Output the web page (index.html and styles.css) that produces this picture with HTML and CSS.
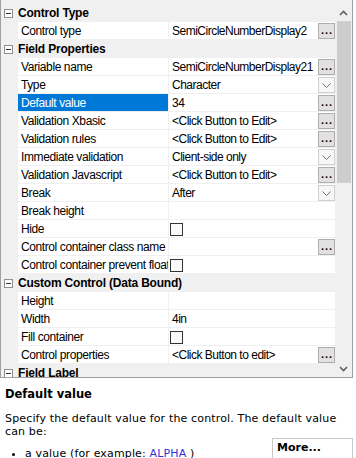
FILE: index.html
```html
<!DOCTYPE html>
<html lang="en">
<head>
  <meta charset="UTF-8">
  <title>Properties</title>
  <link rel="stylesheet" href="styles.css">
</head>
<body>
  <div class="grid">
    <div class="rows">
      <div class="cat"><span class="toggle"></span><span>Control Type</span></div>
      <div class="prop">
        <div class="name">Control type</div>
        <div class="value"><span class="text">SemiCircleNumberDisplay2</span><span class="btn">...</span></div>
      </div>

      <div class="cat"><span class="toggle"></span><span>Field Properties</span></div>
      <div class="prop">
        <div class="name">Variable name</div>
        <div class="value"><span class="text">SemiCircleNumberDisplay21</span><span class="btn">...</span></div>
      </div>
      <div class="prop">
        <div class="name">Type</div>
        <div class="value"><span class="text">Character</span><span class="drop"><svg width="9" height="5" viewBox="0 0 9 5"><polyline points="0.5,0.5 4.5,4.5 8.5,0.5" fill="none" stroke="#707070" stroke-width="1"/></svg></span></div>
      </div>
      <div class="prop">
        <div class="name selected">Default value</div>
        <div class="value"><span class="text">34</span><span class="btn">...</span></div>
      </div>
      <div class="prop">
        <div class="name">Validation Xbasic</div>
        <div class="value"><span class="text">&lt;Click Button to Edit&gt;</span><span class="btn">...</span></div>
      </div>
      <div class="prop">
        <div class="name">Validation rules</div>
        <div class="value"><span class="text">&lt;Click Button to Edit&gt;</span><span class="btn">...</span></div>
      </div>
      <div class="prop">
        <div class="name">Immediate validation</div>
        <div class="value"><span class="text">Client-side only</span><span class="drop"><svg width="9" height="5" viewBox="0 0 9 5"><polyline points="0.5,0.5 4.5,4.5 8.5,0.5" fill="none" stroke="#707070" stroke-width="1"/></svg></span></div>
      </div>
      <div class="prop">
        <div class="name">Validation Javascript</div>
        <div class="value"><span class="text">&lt;Click Button to Edit&gt;</span><span class="btn">...</span></div>
      </div>
      <div class="prop">
        <div class="name">Break</div>
        <div class="value"><span class="text">After</span><span class="drop"><svg width="9" height="5" viewBox="0 0 9 5"><polyline points="0.5,0.5 4.5,4.5 8.5,0.5" fill="none" stroke="#707070" stroke-width="1"/></svg></span></div>
      </div>
      <div class="prop">
        <div class="name">Break height</div>
        <div class="value"><span class="text"></span></div>
      </div>
      <div class="prop">
        <div class="name">Hide</div>
        <div class="value"><span class="check"></span></div>
      </div>
      <div class="prop">
        <div class="name">Control container class name</div>
        <div class="value"><span class="text"></span><span class="btn">...</span></div>
      </div>
      <div class="prop">
        <div class="name">Control container prevent float</div>
        <div class="value"><span class="check"></span></div>
      </div>

      <div class="cat"><span class="toggle"></span><span>Custom Control (Data Bound)</span></div>
      <div class="prop">
        <div class="name">Height</div>
        <div class="value"><span class="text"></span></div>
      </div>
      <div class="prop">
        <div class="name">Width</div>
        <div class="value"><span class="text">4in</span></div>
      </div>
      <div class="prop">
        <div class="name">Fill container</div>
        <div class="value"><span class="check"></span></div>
      </div>
      <div class="prop">
        <div class="name">Control properties</div>
        <div class="value"><span class="text">&lt;Click Button to edit&gt;</span><span class="btn">...</span></div>
      </div>

      <div class="cat"><span class="toggle"></span><span>Field Label</span></div>
    </div>

    <div class="scrollbar">
      <div class="sb-btn"><svg width="9" height="6" viewBox="0 0 9 6"><polyline points="1,5 4.5,1.5 8,5" fill="none" stroke="#606060" stroke-width="1.6"/></svg></div>
      <div class="track"><div class="thumb"></div></div>
      <div class="sb-btn"><svg width="9" height="6" viewBox="0 0 9 6"><polyline points="1,1 4.5,4.5 8,1" fill="none" stroke="#606060" stroke-width="1.6"/></svg></div>
    </div>
  </div>

  <div class="help">
    <h2>Default value</h2>
    <p>Specify the default value for the control. The default value can be:</p>
    <div class="more">More...</div>
    <ul>
      <li>a value (for example: <span class="code">ALPHA</span> )</li>
    </ul>
  </div>
</body>
</html>
```

FILE: styles.css
```css
html, body {
  margin: 0;
  padding: 0;
  overflow: hidden;
  background-color: #fff;
}

body {
  font-family: "Liberation Sans", Arial, sans-serif;
}

/* property grid */
.grid {
  display: flex;
  width: 353px;
  height: 378px;
  box-sizing: border-box;
  border: 1px solid #a0a0a0;
  border-top: none;
  background-color: #f0f0f0;
  font-size: 12px;
  letter-spacing: -0.4px;
  color: #000;
}

.rows {
  flex: 1;
  min-width: 0;
  padding-top: 4px;
  display: flex;
  flex-direction: column;
  gap: 1px;
  overflow: hidden;
}

.cat,
.prop {
  flex: none;
  display: flex;
  height: 17px;
  line-height: 18px;
}

.cat {
  align-items: center;
  padding-left: 3px;
  font-weight: bold;
  letter-spacing: -0.2px;
}

.toggle {
  flex: none;
  display: flex;
  align-items: center;
  justify-content: center;
  width: 9px;
  height: 9px;
  margin: 1px 5px 0 0;
  box-sizing: border-box;
  border: 1px solid #8e8f8f;
  background-color: #fff;
}

.toggle::after {
  content: "";
  width: 5px;
  height: 1px;
  background-color: #333;
}

.prop {
  padding-left: 17px;
}

.name {
  flex: none;
  width: 150px;
  margin-right: 1px;
  padding-left: 3px;
  box-sizing: border-box;
  background-color: #fff;
  white-space: nowrap;
  overflow: hidden;
}

.name.selected {
  background-color: #0078d7;
  color: #fff;
}

.value {
  flex: 1;
  min-width: 0;
  display: flex;
  background-color: #fff;
}

.value .text {
  flex: 1;
  min-width: 0;
  padding-left: 3px;
  letter-spacing: -0.5px;
  white-space: nowrap;
  overflow: hidden;
}

.btn,
.drop {
  flex: none;
  display: flex;
  align-items: center;
  justify-content: center;
  width: 17px;
  height: 16px;
  margin-top: 1px;
  box-sizing: border-box;
}

.btn {
  border: 1px solid #adadad;
  background-color: #e1e1e1;
  font-size: 11px;
  font-weight: bold;
  letter-spacing: 1px;
  line-height: 12px;
  padding: 0 0 3px 1px;
}

.drop {
  border: 1px solid #d0d0d0;
  background-color: #f7f7f7;
}

.check {
  flex: none;
  width: 13px;
  height: 13px;
  margin: 3px 0 0 1px;
  box-sizing: border-box;
  border: 1px solid #333;
  background-color: #f9f9f9;
}

/* scrollbar */
.scrollbar {
  flex: none;
  width: 17px;
  padding-top: 4px;
  display: flex;
  flex-direction: column;
}

.sb-btn {
  flex: none;
  height: 17px;
  display: flex;
  align-items: center;
  justify-content: center;
}

.track {
  flex: 1;
}

.thumb {
  height: 162px;
  margin: 0 1px 0 2px;
  background-color: #cdcdcd;
}

/* help panel */
.help {
  padding: 9px 3px 0 5px;
  font-family: "DejaVu Sans", Verdana, sans-serif;
  font-size: 11px;
  line-height: 13px;
  letter-spacing: 0.15px;
  color: #000;
}

.help h2 {
  margin: 0 0 11px;
  font-size: 11.5px;
  line-height: 14px;
  letter-spacing: 0;
}

.help p {
  margin: 0;
}

.more {
  float: right;
  width: 81px;
  height: 40px;
  padding: 2px 0 0 4px;
  box-sizing: border-box;
  border: 1px solid #c8c8c8;
  border-bottom: none;
  font-weight: bold;
  letter-spacing: 0;
}

.help ul {
  margin: 9px 0 0;
  padding-left: 20px;
}

.code {
  color: #3232d2;
}
```
